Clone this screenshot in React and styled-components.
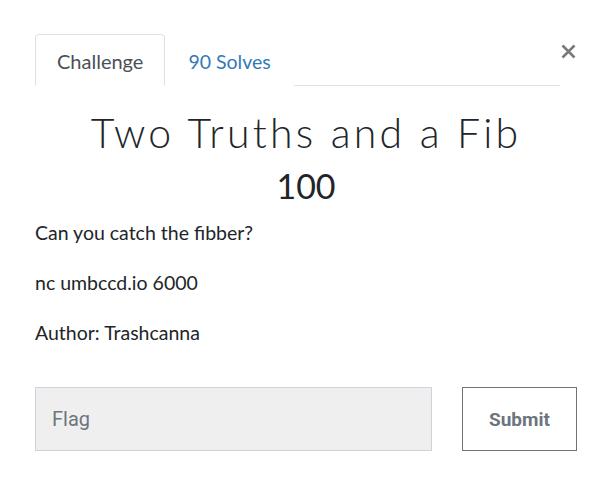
import React from "react";
import styled, { createGlobalStyle } from "styled-components";

const Global = createGlobalStyle`
  html, body {
    margin: 0;
    padding: 0;
    background: #fff;
  }
  body {
    font-family: Lato, "Open Sans", sans-serif;
    color: #212529;
  }
`;

const Modal = styled.div`
  position: relative;
  width: 604px;
  height: 486px;
  box-sizing: border-box;
  padding: 34px 27px 0 35px;
  background: #fff;
`;

const Close = styled.button`
  position: absolute;
  top: 39px;
  right: 28px;
  border: none;
  background: none;
  padding: 0;
  width: 16px;
  height: 24px;
  display: flex;
  align-items: center;
  justify-content: center;
  cursor: pointer;
`;

const Tabs = styled.div`
  display: flex;
  margin-right: 17px;
  border-bottom: 1px solid #dee2e6;
`;

const Tab = styled.div`
  height: 52px;
  box-sizing: border-box;
  padding: 2px ${(p) => (p.active ? 21 : 22)}px 0;
  display: flex;
  align-items: center;
  font-size: ${(p) => (p.active ? 20 : 19.5)}px;
  margin-bottom: -1px;
  border: 1px solid ${(p) => (p.active ? "#dee2e6" : "transparent")};
  border-bottom-color: ${(p) => (p.active ? "#fff" : "transparent")};
  border-radius: 4px 4px 0 0;
  background: #fff;
  color: ${(p) => (p.active ? "#495057" : "#337ab7")};
`;

const Title = styled.h1`
  margin: 22px 0 0;
  text-align: center;
  font-family: Lato, sans-serif;
  font-weight: 300;
  font-size: 41px;
  letter-spacing: 3.2px;
  line-height: 50px;
  color: #212529;
`;

const Value = styled.div`
  text-align: center;
  font-size: 34px;
  line-height: 40px;
  margin-top: 8px;
  color: #212529;
`;

const Text = styled.p`
  margin: 0;
  font-size: 19.5px;
  line-height: 26px;
  color: #212529;
`;

const Body = styled.div`
  margin-top: 14px;
  display: flex;
  flex-direction: column;
  gap: 24px;
`;

const Form = styled.form`
  margin-top: 41px;
  display: flex;
  gap: 30px;
`;

const Input = styled.input`
  flex: 1;
  height: 64px;
  box-sizing: border-box;
  border: 1px solid #ccd3dc;
  background: #efefef;
  padding: 0 16px;
  font-family: Roboto, "Liberation Sans", sans-serif;
  font-size: 20px;
  color: #495057;
  outline: none;
  &::placeholder {
    color: #6c757d;
  }
`;

const Submit = styled.button`
  width: 115px;
  height: 64px;
  box-sizing: border-box;
  border: 1px solid #6c757d;
  background: #fff;
  color: #6c757d;
  font-family: Roboto, "Liberation Sans", sans-serif;
  font-weight: 700;
  font-size: 19px;
  cursor: pointer;
`;

export default function App() {
  return (
    <>
      <Global />
      <Modal>
        <Close aria-label="Close">
          <svg width="15" height="15" viewBox="0 0 15 15">
            <path d="M1.5 1.5 L13.5 13.5 M13.5 1.5 L1.5 13.5" stroke="#7a7a7a" strokeWidth="2.6" />
          </svg>
        </Close>
        <Tabs>
          <Tab active>Challenge</Tab>
          <Tab>90 Solves</Tab>
        </Tabs>
        <Title>Two Truths and a Fib</Title>
        <Value>100</Value>
        <Body>
          <Text>Can you catch the fibber?</Text>
          <Text>nc umbccd.io 6000</Text>
          <Text>Author: Trashcanna</Text>
        </Body>
        <Form onSubmit={(e) => e.preventDefault()}>
          <Input placeholder="Flag" />
          <Submit type="submit">Submit</Submit>
        </Form>
      </Modal>
    </>
  );
}
